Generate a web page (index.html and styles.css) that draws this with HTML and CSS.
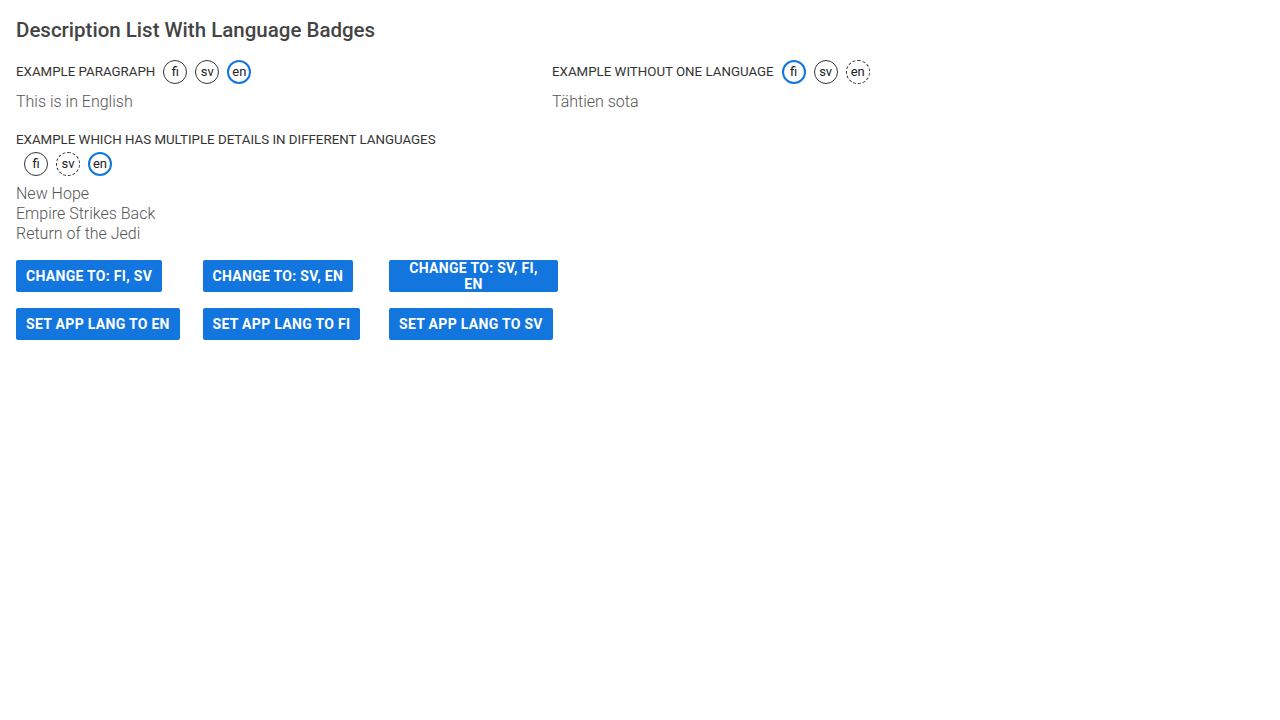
FILE: index.html
```html
<!DOCTYPE html>
<html lang="en">
<head>
<meta charset="utf-8">
<title>Description List With Language Badges</title>
<link rel="stylesheet" href="styles.css">
</head>
<body>
<main class="page">
  <h1 class="title">Description List With Language Badges</h1>
  <dl class="dlist">
    <div class="item">
      <dt class="term">EXAMPLE PARAGRAPH<span class="badges"><span class="badge">fi</span><span class="badge">sv</span><span class="badge active">en</span></span></dt>
      <dd class="desc">This is in English</dd>
    </div>
    <div class="item">
      <dt class="term">EXAMPLE WITHOUT ONE LANGUAGE<span class="badges"><span class="badge active">fi</span><span class="badge">sv</span><span class="badge missing">en</span></span></dt>
      <dd class="desc">Tähtien sota</dd>
    </div>
    <div class="item">
      <dt class="term">EXAMPLE WHICH HAS MULTIPLE DETAILS IN DIFFERENT LANGUAGES<span class="badges wrap"><span class="badge">fi</span><span class="badge missing">sv</span><span class="badge active">en</span></span></dt>
      <dd class="desc">New Hope</dd>
      <dd class="desc">Empire Strikes Back</dd>
      <dd class="desc">Return of the Jedi</dd>
    </div>
  </dl>
  <div class="buttons">
    <button class="btn">Change to: fi, sv</button>
    <button class="btn">Change to: sv, en</button>
    <button class="btn">Change to: sv, fi, en</button>
    <button class="btn">Set app lang to en</button>
    <button class="btn">Set app lang to fi</button>
    <button class="btn">Set app lang to sv</button>
  </div>
</main>
</body>
</html>
```
FILE: styles.css
```css
* { box-sizing: border-box; }
html, body { margin: 0; padding: 0; background: #fff; }
body {
  font-family: Roboto, "Open Sans", sans-serif;
  color: #333;
}
.page { padding: 16px; }
.title {
  margin: 0;
  font-size: 20.5px;
  line-height: 28px;
  font-weight: 500;
  color: #444;
}
.dlist {
  margin: 16px 0 0;
  display: grid;
  grid-template-columns: 536px 536px;
  row-gap: 16px;
}
.item { display: block; }
.term {
  font-size: 13.3px;
  line-height: 24px;
  color: #333;
  display: block;
}
.badges { margin-left: 8px; display: inline-flex; gap: 8px; vertical-align: top; }
.badges.wrap { display: flex; margin-left: 8px; margin-top: 0; }
.badge {
  width: 24px;
  height: 24px;
  border-radius: 50%;
  border: 1px solid #333;
  font-size: 13px;
  line-height: 22px;
  text-align: center;
  color: #222;
}
.badge.active { border: 2px solid #1276de; line-height: 20px; }
.badge.missing { border-style: dashed; }
.desc {
  margin: 8px 0 0;
  font-size: 16px;
  line-height: 20px;
  font-weight: 300;
  color: #555;
}
.desc + .desc { margin-top: 0; }
.buttons {
  margin-top: 16px;
  display: grid;
  grid-template-columns: repeat(3, 169px);
  column-gap: 17.5px;
  row-gap: 16px;
  justify-items: start;
}
.btn {
  height: 32px;
  max-width: 100%;
  padding: 0 10px;
  border: 0;
  border-radius: 2px;
  background: #1276de;
  color: #fff;
  font-family: Roboto, sans-serif;
  font-size: 14px;
  font-weight: 700;
  letter-spacing: 0.3px;
  line-height: 16px;
  text-transform: uppercase;
}
```
